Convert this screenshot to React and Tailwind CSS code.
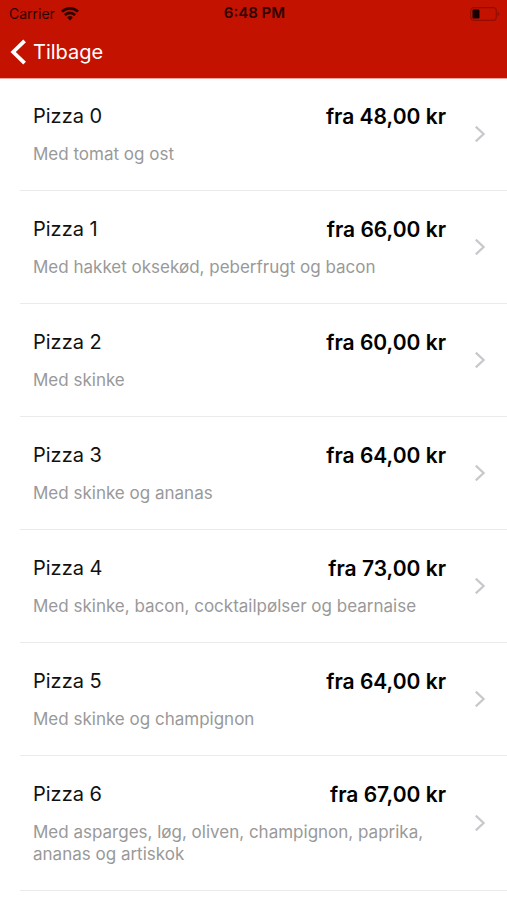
const pizzas = [
  { name: "Pizza 0", price: "48,00", description: "Med tomat og ost" },
  { name: "Pizza 1", price: "66,00", description: "Med hakket oksekød, peberfrugt og bacon" },
  { name: "Pizza 2", price: "60,00", description: "Med skinke" },
  { name: "Pizza 3", price: "64,00", description: "Med skinke og ananas" },
  { name: "Pizza 4", price: "73,00", description: "Med skinke, bacon, cocktailpølser og bearnaise" },
  { name: "Pizza 5", price: "64,00", description: "Med skinke og champignon" },
  { name: "Pizza 6", price: "67,00", description: "Med asparges, løg, oliven, champignon, paprika, ananas og artiskok" },
];

function WifiIcon() {
  return (
    <svg className="h-[14px] w-[18px]" viewBox="0 0 18 14" fill="none" stroke="currentColor" strokeWidth="2.6">
      <path d="M1 4.7a11.3 11.3 0 0 1 16 0" />
      <path d="M3.9 8a7.2 7.2 0 0 1 10.2 0" />
      <path d="M6.2 10.4a4 4 0 0 1 5.6 0L9 13.4z" fill="currentColor" stroke="none" />
    </svg>
  );
}

function BatteryIcon() {
  return (
    <svg className="h-[14px] w-[30px]" viewBox="0 0 30 14" fill="none">
      <rect x="0.7" y="0.7" width="25.6" height="12.6" rx="3" stroke="#930e02" strokeWidth="1.2" />
      <rect x="2.5" y="2.5" width="7" height="9" rx="1.2" fill="#160000" />
      <path d="M27.6 4.8v4.4c1-.4 1.8-1.2 1.8-2.2s-.8-1.8-1.8-2.2z" fill="#930e02" />
    </svg>
  );
}

function PizzaRow({ name, price, description }) {
  return (
    <li className="ml-5 border-b border-[#ebebeb]">
      <a href="#" className="flex items-center pt-6 pr-[21px] pb-6 pl-[13px]">
        <div className="min-w-0 flex-1">
          <div className="flex items-start justify-between pr-[28px]">
            <h2 className="text-[20px] leading-7 text-[#111111]">{name}</h2>
            <p className="text-[21px] leading-[30px] font-semibold text-black">fra {price} kr</p>
          </div>
          <p className="mt-[11px] mb-px pr-[28px] text-[17px] leading-[22px] text-[#999999]">{description}</p>
        </div>
        <svg className="h-4 w-3 shrink-0" viewBox="0 0 12 16" fill="none" stroke="#c7c7cc" strokeWidth="2.2">
          <path d="M1.8 0.6 9.6 8l-7.8 7.4" />
        </svg>
      </a>
    </li>
  );
}

export default function App() {
  return (
    <div className="min-h-screen bg-white font-['Inter',sans-serif]">
      <header className="bg-[#c41200] shadow-[0_1px_0_#f0a49c]">
        <div className="grid h-[27px] grid-cols-3 items-center pr-[7px] pl-[9px] text-[#2b0300]">
          <div className="flex items-center gap-[6px] text-[14px]">
            <span>Carrier</span>
            <WifiIcon />
          </div>
          <span className="text-center text-[15px] font-semibold">6:48 PM</span>
          <div className="flex justify-end">
            <BatteryIcon />
          </div>
        </div>
        <nav className="flex h-[51px] items-center pb-px pl-[10px]">
          <a href="#" className="flex items-center gap-[7px] text-[20px] leading-7 text-white">
            <svg className="h-[26px] w-4" viewBox="0 0 16 26" fill="none" stroke="currentColor" strokeWidth="3.8">
              <path d="M14.6 1.8 3.2 13l11.4 11.2" />
            </svg>
            Tilbage
          </a>
        </nav>
      </header>

      <main>
        <ul>
          {pizzas.map((pizza) => (
            <PizzaRow key={pizza.name} {...pizza} />
          ))}
        </ul>
      </main>
    </div>
  );
}
